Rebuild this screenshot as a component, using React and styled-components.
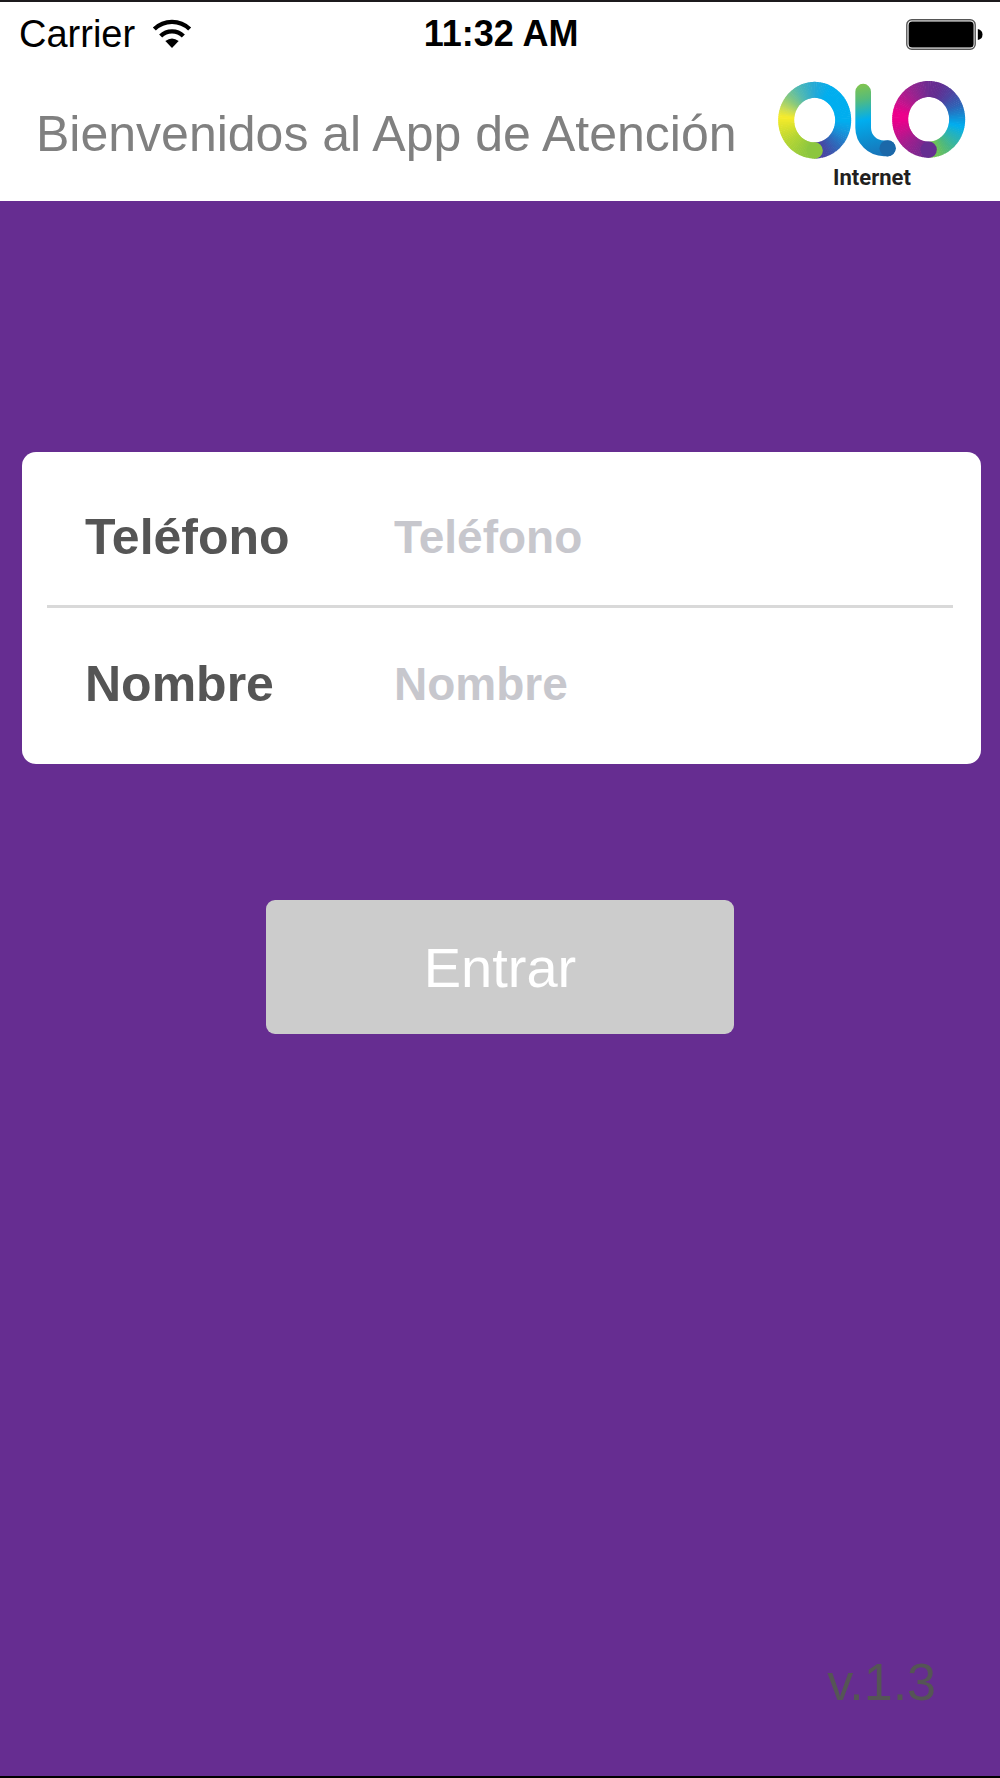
import React, { Component } from "react";
import styled, { createGlobalStyle } from "styled-components";

const GlobalStyle = createGlobalStyle`
  * {
    box-sizing: border-box;
  }
  body {
    margin: 0;
    background: #662d91;
    font-family: "Liberation Sans", Arial, Helvetica, sans-serif;
  }
`;

const Screen = styled.div`
  min-height: 100vh;
  display: flex;
  flex-direction: column;
  background: #662d91;
  border-top: 2px solid #1c1a1d;
  border-bottom: 2px solid #000;
`;

const StatusBar = styled.div`
  height: 64px;
  padding: 0 17px 0 19px;
  display: grid;
  grid-template-columns: 1fr auto 1fr;
  align-items: center;
  background: #fff;
  color: #000;
`;
const Carrier = styled.div`
  display: flex;
  align-items: center;
  gap: 17px;
  font-size: 38px;
`;
const Clock = styled.div`
  font-size: 36px;
  font-weight: 700;
`;
const BatteryIcon = styled.svg`
  width: 77px;
  height: 31px;
  justify-self: end;
`;
const WifiIcon = styled.svg`
  width: 40px;
  height: 30px;
`;

const Header = styled.header`
  height: 135px;
  padding: 0 34px 0 36px;
  display: flex;
  justify-content: space-between;
  align-items: center;
  background: #fff;
`;
const Title = styled.h1`
  margin: 0;
  font-size: 50px;
  font-weight: 400;
  color: #808080;
`;
const Brand = styled.div`
  padding-top: 4px;
  display: flex;
  flex-direction: column;
  align-items: center;
`;
const LogoMark = styled.svg`
  width: 188px;
  height: 79px;
`;
const BrandName = styled.span`
  margin-top: 6px;
  font-family: Roboto, "Liberation Sans", sans-serif;
  font-size: 22px;
  line-height: 26px;
  font-weight: 700;
  color: #231f20;
`;

const Form = styled.form`
  flex: 1;
  display: flex;
  flex-direction: column;
  padding-top: 251px;
`;
const Card = styled.div`
  margin: 0 19px 0 22px;
  padding: 17px 28px 12px 25px;
  border-radius: 14px;
  background: #fff;
`;
const Row = styled.div`
  padding-left: 38px;
  display: flex;
  align-items: center;
  height: ${(props) => (props.$divider ? "139px" : "136px")};
  border-bottom: ${(props) => (props.$divider ? "3px solid #d9d9d9" : "none")};
  & + & {
    margin-top: 8px;
  }
`;
const Label = styled.label`
  width: 309px;
  flex-shrink: 0;
  font-size: 50px;
  font-weight: 700;
  color: #555;
`;
const Input = styled.input`
  flex: 1;
  min-width: 0;
  padding: 0;
  border: none;
  outline: none;
  background: transparent;
  font-family: inherit;
  font-size: 46px;
  font-weight: 700;
  color: #555;
  &::placeholder {
    color: #c7c7cd;
    opacity: 1;
  }
`;
const Submit = styled.button`
  align-self: center;
  width: 468px;
  max-width: 100%;
  height: 134px;
  margin-top: 136px;
  padding: 0;
  border: none;
  border-radius: 9px;
  background: #ccc;
  color: #fff;
  font-family: inherit;
  font-size: 56px;
  cursor: pointer;
`;

const Version = styled.footer`
  padding: 0 64px 64px;
  font-size: 52px;
  line-height: 60px;
  text-align: right;
  color: #555;
`;

// colour stops by angle, clockwise from the top
const leftRing = [
  [0, [38, 169, 214]],
  [28, [0, 174, 239]],
  [92, [0, 174, 239]],
  [110, [18, 152, 222]],
  [135, [43, 108, 188]],
  [158, [66, 76, 167]],
  [178, [84, 60, 158]],
  [179, [140, 198, 63]],
  [200, [146, 201, 62]],
  [235, [183, 214, 51]],
  [262, [226, 228, 44]],
  [276, [247, 236, 43]],
  [290, [201, 220, 85]],
  [308, [137, 201, 125]],
  [330, [83, 186, 176]],
  [360, [38, 169, 214]],
];
const rightRing = [
  [0, [108, 44, 145]],
  [20, [98, 46, 145]],
  [42, [78, 66, 160]],
  [65, [48, 98, 181]],
  [85, [20, 140, 212]],
  [102, [0, 174, 239]],
  [120, [36, 178, 190]],
  [145, [75, 184, 130]],
  [165, [110, 193, 88]],
  [178, [120, 196, 80]],
  [179, [100, 46, 145]],
  [200, [128, 39, 143]],
  [225, [160, 31, 142]],
  [250, [204, 14, 140]],
  [270, [236, 0, 140]],
  [282, [236, 0, 140]],
  [305, [188, 22, 141]],
  [330, [150, 36, 143]],
  [360, [108, 44, 145]],
];

const colorAt = (stops, angle) => {
  const i = stops.findIndex(([a]) => a >= angle);
  if (i <= 0) return `rgb(${stops[0][1].join(",")})`;
  const [a0, c0] = stops[i - 1];
  const [a1, c1] = stops[i];
  const t = (angle - a0) / (a1 - a0);
  return `rgb(${c0.map((c, k) => Math.round(c + (c1[k] - c) * t)).join(",")})`;
};

const STEP = 3;
const Ring = ({ cx, cy, stops, capColor }) => {
  const point = (deg) => {
    const rad = (deg * Math.PI) / 180;
    return `${cx + 85.5 * Math.sin(rad)} ${cy - 91 * Math.cos(rad)}`;
  };
  const parts = [];
  for (let a = 0; a < 360; a += STEP) {
    parts.push(
      <path
        key={a}
        d={`M${point(a - 0.6)} L${point(a + STEP / 2)} L${point(a + STEP + 0.6)}`}
        stroke={colorAt(stops, a + STEP / 2)}
      />
    );
  }
  return (
    <g fill="none" strokeWidth="48">
      {parts}
      <circle cx={cx} cy={cy + 91} r="24.5" fill={capColor} stroke="none" />
    </g>
  );
};

const Logo = () => (
  <LogoMark viewBox="54 45 564 237" aria-hidden="true">
    <defs>
      <linearGradient
        id="stem"
        gradientUnits="userSpaceOnUse"
        x1="300"
        y1="60"
        x2="345"
        y2="275"
      >
        <stop offset="0" stopColor="#7fc450" />
        <stop offset="0.2" stopColor="#55bb7c" />
        <stop offset="0.48" stopColor="#00aeef" />
        <stop offset="0.75" stopColor="#0d8fd0" />
        <stop offset="1" stopColor="#1873b8" />
      </linearGradient>
    </defs>
    <Ring cx={164} cy={165.5} stops={leftRing} capColor="#8cc63f" />
    <path
      d="M309.5 80V188A63 62 0 0 0 372 250H383"
      fill="none"
      stroke="url(#stem)"
      strokeWidth="47"
      strokeLinecap="round"
    />
    <circle cx="383" cy="250" r="24.5" fill="#1b68a9" />
    <Ring cx={506} cy={163} stops={rightRing} capColor="#652d91" />
  </LogoMark>
);

const Wifi = () => (
  <WifiIcon viewBox="458 52 120 90" aria-hidden="true">
    <g fill="none" stroke="#000" strokeWidth="13">
      <path d="M465 82A76 76 0 0 1 571 82" />
      <path d="M484 103A48 48 0 0 1 552 103" />
    </g>
    <path d="M498 118Q518 103 538 118L518 139Z" />
  </WifiIcon>
);

const Battery = () => (
  <BatteryIcon viewBox="0 0 77 31" aria-hidden="true">
    <rect
      x="0.8"
      y="0.8"
      width="68.4"
      height="29.4"
      rx="5"
      fill="#fff"
      stroke="#555"
      strokeWidth="1.4"
    />
    <rect x="2.6" y="2.6" width="65" height="25.8" rx="3.5" />
    <path d="M71.8 10Q76.5 11 76.5 15.5T71.8 21Z" />
  </BatteryIcon>
);

class App extends Component {
  state = { telefono: "", nombre: "" };

  handleChange = (e) => {
    this.setState({ [e.target.name]: e.target.value });
  };

  handleSubmit = (e) => {
    e.preventDefault();
  };

  render() {
    const { telefono, nombre } = this.state;
    return (
      <>
        <GlobalStyle />
        <Screen>
          <StatusBar>
            <Carrier>
              Carrier
              <Wifi />
            </Carrier>
            <Clock>11:32 AM</Clock>
            <Battery />
          </StatusBar>
          <Header>
            <Title>Bienvenidos al App de Atención</Title>
            <Brand>
              <Logo />
              <BrandName>Internet</BrandName>
            </Brand>
          </Header>
          <Form onSubmit={this.handleSubmit}>
            <Card>
              <Row $divider>
                <Label htmlFor="telefono">Teléfono</Label>
                <Input
                  id="telefono"
                  name="telefono"
                  type="tel"
                  placeholder="Teléfono"
                  value={telefono}
                  onChange={this.handleChange}
                />
              </Row>
              <Row>
                <Label htmlFor="nombre">Nombre</Label>
                <Input
                  id="nombre"
                  name="nombre"
                  type="text"
                  placeholder="Nombre"
                  value={nombre}
                  onChange={this.handleChange}
                />
              </Row>
            </Card>
            <Submit type="submit">Entrar</Submit>
          </Form>
          <Version>v.1.3</Version>
        </Screen>
      </>
    );
  }
}

export default App;
